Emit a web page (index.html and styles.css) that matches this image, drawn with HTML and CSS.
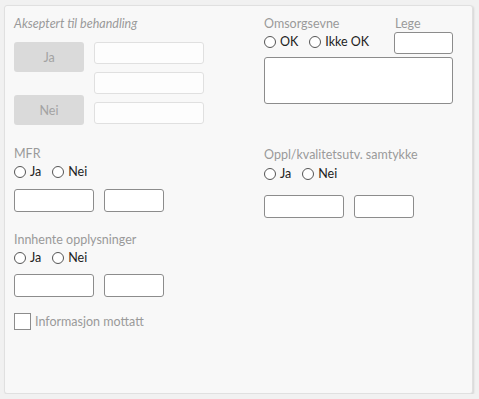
FILE: index.html
```html
<!DOCTYPE html>
<html lang="no">
<head>
    <meta charset="UTF-8">
    <title>Behandling</title>
    <link rel="stylesheet" href="styles.css">
</head>
<body>

    <div class="panel">
        <!-- Venstre kolonne -->
        <div class="col">
            <div class="title">Akseptert til behandling</div>

            <div class="accept">
                <div class="accept-buttons">
                    <button class="btn-flat">Ja</button>
                    <button class="btn-flat">Nei</button>
                </div>
                <div class="accept-fields">
                    <input type="text" class="field-soft">
                    <input type="text" class="field-soft">
                    <input type="text" class="field-soft">
                </div>
            </div>

            <div class="group mfr">
                <div class="label">MFR</div>
                <div class="radios">
                    <label class="radio"><span class="dot"></span>Ja</label>
                    <label class="radio"><span class="dot"></span>Nei</label>
                </div>
                <div class="pair">
                    <input type="text" class="field wide">
                    <input type="text" class="field narrow">
                </div>
            </div>

            <div class="group innhente">
                <div class="label">Innhente opplysninger</div>
                <div class="radios">
                    <label class="radio"><span class="dot"></span>Ja</label>
                    <label class="radio"><span class="dot"></span>Nei</label>
                </div>
                <div class="pair">
                    <input type="text" class="field wide">
                    <input type="text" class="field narrow">
                </div>
            </div>

            <label class="check"><span class="box"></span>Informasjon mottatt</label>
        </div>

        <!-- Høyre kolonne -->
        <div class="col right">
            <div class="omsorg-head">
                <div>
                    <div class="label">Omsorgsevne</div>
                    <div class="radios">
                        <label class="radio"><span class="dot"></span>OK</label>
                        <label class="radio"><span class="dot"></span>Ikke OK</label>
                    </div>
                </div>
                <div class="lege">
                    <div class="label">Lege</div>
                    <input type="text" class="field lege-field">
                </div>
            </div>
            <textarea class="field note"></textarea>

            <div class="group oppl">
                <div class="label">Oppl/kvalitetsutv. samtykke</div>
                <div class="radios">
                    <label class="radio"><span class="dot"></span>Ja</label>
                    <label class="radio"><span class="dot"></span>Nei</label>
                </div>
                <div class="pair">
                    <input type="text" class="field wide">
                    <input type="text" class="field narrow">
                </div>
            </div>
        </div>
    </div>

</body>
</html>
```

FILE: styles.css
```css
/* Grunnoppsett */
body {
    margin: 0;
    background: #f1f1f1;
    font-family: 'Lato', 'Open Sans', sans-serif;
    font-size: 12.5px;
    color: #333;
}

.panel {
    box-sizing: border-box;
    margin: 5px 0 0 4px;
    width: 469px;
    height: 389px;
    padding: 10px 9px;
    background: #f8f8f8;
    border: 1px solid #e0e0e0;
    border-radius: 3px;
    box-shadow: 1px 1px 2px rgba(0, 0, 0, 0.12);
    display: grid;
    grid-template-columns: 250px 1fr;
}

.col { display: flex; flex-direction: column; align-items: flex-start; }

.title, .label {
    color: #9a9a9a;
    line-height: 16px;
}
.title { font-style: italic; }

/* Akseptert-knapper */
.accept {
    display: flex;
    gap: 10px;
    margin-top: 10px;
}
.accept-buttons {
    display: flex;
    flex-direction: column;
    justify-content: space-between;
    height: 83px;
}
.btn-flat {
    width: 70px;
    height: 30px;
    border: none;
    border-radius: 3px;
    background: #dadada;
    color: #a3a3a3;
    font: inherit;
    padding: 0;
}
.accept-fields { display: flex; flex-direction: column; gap: 8px; }

input, textarea { font: inherit; margin: 0; }

.field-soft {
    box-sizing: border-box;
    width: 110px;
    height: 22px;
    border: 1px solid #e0e0e0;
    border-radius: 3px;
    background: #fdfdfd;
}

.field {
    box-sizing: border-box;
    height: 23px;
    border: 1px solid #8c8c8c;
    border-radius: 3px;
    background: #fff;
}
.wide { width: 80px; }
.narrow { width: 60px; }

/* Radioknapper */
.radios {
    display: flex;
    gap: 11px;
    margin-top: 2px;
    line-height: 16px;
}
.radio {
    display: flex;
    align-items: center;
    gap: 4px;
    color: #222;
}
.dot {
    box-sizing: border-box;
    width: 12px;
    height: 12px;
    border: 1px solid #555;
    border-radius: 50%;
    background: #fff;
}

.pair { display: flex; gap: 10px; margin-top: 9px; }

.mfr { margin-top: 21px; }
.innhente { margin-top: 20px; }
.innhente .pair { margin-top: 8px; }

.check {
    display: flex;
    align-items: center;
    gap: 4px;
    margin-top: 16px;
    color: #9a9a9a;
}
.box {
    box-sizing: border-box;
    width: 17px;
    height: 17px;
    border: 1px solid #8c8c8c;
    background: #fff;
}

/* Høyre kolonne */
.omsorg-head {
    display: flex;
    justify-content: space-between;
    width: 189px;
}
.lege { width: 59px; }
.lege .label { padding-left: 1px; }
.lege-field { width: 59px; height: 22px; }
.note {
    width: 189px;
    height: 47px;
    margin-top: 3px;
    resize: none;
}
.oppl { margin-top: 43px; }
.oppl .radios { margin-top: 3px; }
.oppl .pair { margin-top: 13px; }
```
